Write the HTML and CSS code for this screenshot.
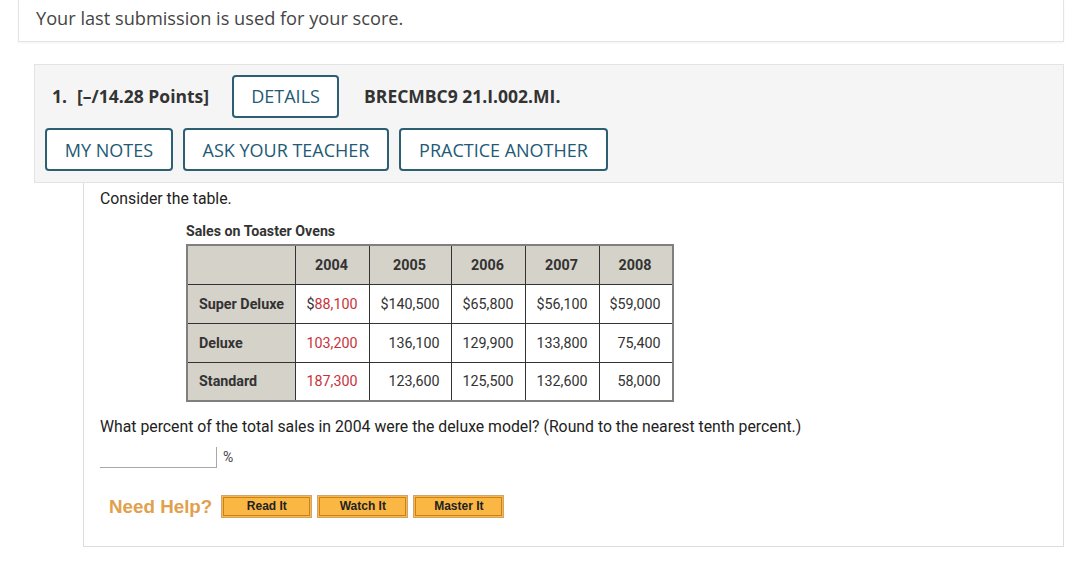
FILE: index.html
```html
<!DOCTYPE html>
<html>
<head>
<meta charset="utf-8">
<link rel="stylesheet" href="styles.css">
</head>
<body>
<div class="page">
  <div class="notice">Your last submission is used for your score.</div>

  <div class="qhead">
    <div class="qrow1">
      <span class="qnum">1.</span>
      <span class="qpts">[–/14.28 Points]</span>
      <button class="btn btn-details">DETAILS</button>
      <span class="qcode">BRECMBC9 21.I.002.MI.</span>
    </div>
    <div class="qrow2">
      <button class="btn btn-notes">MY NOTES</button>
      <button class="btn btn-ask">ASK YOUR TEACHER</button>
      <button class="btn btn-practice">PRACTICE ANOTHER</button>
    </div>
  </div>

  <div class="qbody">
    <p class="intro">Consider the table.</p>
    <div class="tablewrap">
      <div class="caption">Sales on Toaster Ovens</div>
      <table class="sales">
        <colgroup>
          <col class="c0"><col class="c1"><col class="c2"><col class="c3"><col class="c4"><col class="c5">
        </colgroup>
        <tr class="hdr">
          <th class="corner"></th><th>2004</th><th>2005</th><th>2006</th><th>2007</th><th>2008</th>
        </tr>
        <tr>
          <th class="rowh">Super Deluxe</th>
          <td>$<span class="red">88,100</span></td><td>$140,500</td><td>$65,800</td><td>$56,100</td><td>$59,000</td>
        </tr>
        <tr>
          <th class="rowh">Deluxe</th>
          <td class="red">103,200</td><td>136,100</td><td>129,900</td><td>133,800</td><td>75,400</td>
        </tr>
        <tr>
          <th class="rowh">Standard</th>
          <td class="red">187,300</td><td>123,600</td><td>125,500</td><td>132,600</td><td>58,000</td>
        </tr>
      </table>
    </div>
    <p class="question">What percent of the total sales in 2004 were the deluxe model? (Round to the nearest tenth percent.)</p>
    <div class="answer">
      <span class="field"></span><span class="unit">%</span>
    </div>
    <div class="help">
      <span class="helplabel">Need Help?</span>
      <button class="hbtn"><span>Read It</span></button>
      <button class="hbtn"><span>Watch It</span></button>
      <button class="hbtn"><span>Master It</span></button>
    </div>
  </div>
</div>
</body>
</html>
```

FILE: styles.css
```css
html, body {
  margin: 0;
  padding: 0;
  background: #ffffff;
}

.page {
  padding-left: 18px;
  width: 1046px;
}

.notice {
  height: 41px;
  border: 1px solid #e4e4e4;
  border-top: none;
  box-shadow: 0 1px 2px rgba(0,0,0,0.05);
  box-sizing: content-box;
  padding-left: 17px;
  font-family: "Open Sans", sans-serif;
  font-size: 18.2px;
  line-height: 37px;
  color: #454545;
}

.qhead {
  margin-top: 22px;
  margin-left: 16px;
  background: #f5f5f5;
  border: 1px solid #e3e3e3;
  padding: 10px 0 11px 10px;
  height: 96px;
}

.qrow1 {
  display: flex;
  align-items: center;
  height: 42px;
  padding-left: 7px;
  font-family: "Open Sans", sans-serif;
  font-weight: 700;
  font-size: 17.5px;
  color: #333;
}

.qnum {
  width: 25px;
}

.qpts {
  margin-right: 23px;
}

.qcode {
  margin-left: 25px;
  color: #333;
}

.qrow2 {
  display: flex;
  gap: 10px;
  margin-top: 11px;
}

.btn {
  height: 43px;
  box-sizing: border-box;
  border: 2px solid #2d5f72;
  border-radius: 4px;
  background: #ffffff;
  color: #225a74;
  font-family: "Open Sans", sans-serif;
  font-size: 18px;
  font-weight: 500;
  padding: 0;
  text-align: center;
  cursor: pointer;
}

.btn-details { width: 107px; }
.btn-notes { width: 128px; }
.btn-ask { width: 206px; }
.btn-practice { width: 209px; }

.qbody {
  margin-left: 65px;
  width: 963px;
  height: 363px;
  border: 1px solid #dddddd;
  border-top: none;
  padding-left: 16px;
  font-family: Roboto, sans-serif;
  color: #222;
}

.intro {
  margin: 0;
  padding-top: 6px;
  font-size: 15.8px;
  line-height: 20px;
}

.tablewrap {
  margin-left: 86px;
  margin-top: 13px;
}

.caption {
  font-size: 14.2px;
  font-weight: 700;
  color: #333;
  line-height: 18px;
  margin-bottom: 4px;
}

.sales {
  border-collapse: collapse;
  border: 2px solid #7f7f7f;
  font-size: 14.3px;
  color: #333;
  white-space: nowrap;
}

.c0 { width: 108px; }
.c1 { width: 74px; }
.c2 { width: 82px; }
.c3 { width: 74px; }
.c4 { width: 74px; }
.c5 { width: 73px; }

.sales th, .sales td {
  border: 1px solid #333;
  height: 39px;
  padding: 0 11px 0 10px;
  box-sizing: border-box;
}

.hdr th {
  background: #d5d2c9;
  text-align: center;
  font-weight: 700;
}

.sales th.rowh {
  background: #d5d2c9;
  text-align: left;
  padding-left: 11px;
  padding-right: 6px;
  font-weight: 700;
}

.sales td {
  text-align: right;
  background: #fff;
}

.red {
  color: #c8333b;
}

.question {
  margin: 15px 0 0 0;
  font-size: 15.8px;
  line-height: 20px;
}

.answer {
  display: flex;
  align-items: flex-end;
  margin-top: 10px;
  height: 21px;
}

.field {
  width: 116px;
  height: 20px;
  border-bottom: 1px solid #a8a8a8;
  border-right: 1px solid #a8a8a8;
}

.unit {
  align-self: flex-start;
  margin-left: 6px;
  font-size: 14px;
  color: #444;
  line-height: 20px;
}

.help {
  display: flex;
  align-items: center;
  margin-top: 27px;
  margin-left: 9px;
  gap: 5px;
}

.helplabel {
  font-family: "Liberation Sans", Arial, sans-serif;
  font-weight: 700;
  font-size: 18.8px;
  color: #e1a14c;
  margin-right: 4px;
}

.hbtn {
  width: 91px;
  height: 23px;
  padding: 1px;
  box-sizing: border-box;
  border: 1px solid #d0a46a;
  background: #fbb744;
  cursor: pointer;
}

.hbtn span {
  display: block;
  height: 19px;
  border: 1px solid #c9821f;
  box-sizing: border-box;
  font-family: "Liberation Sans", Arial, sans-serif;
  font-weight: 700;
  font-size: 12px;
  line-height: 17px;
  color: #222;
  text-align: center;
}
```
